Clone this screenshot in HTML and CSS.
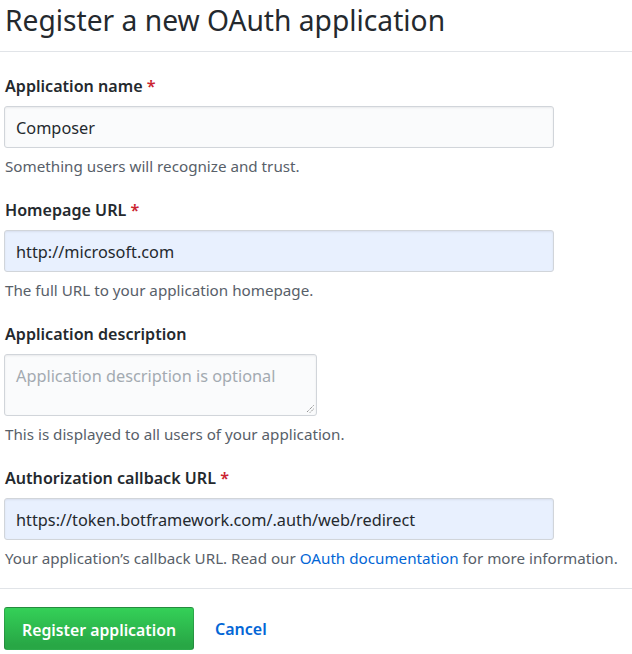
FILE: index.html
```html
<!DOCTYPE html>
<html>
<head>
<meta charset="utf-8">
<link rel="stylesheet" href="styles.css">
</head>
<body>
<div class="page">
  <h1 class="title">Register a new OAuth application</h1>
  <form class="form">
    <div class="group">
      <label class="label">Application name <span class="req">*</span></label>
      <div class="input">Composer</div>
      <p class="note">Something users will recognize and trust.</p>
    </div>
    <div class="group">
      <label class="label">Homepage URL <span class="req">*</span></label>
      <div class="input autofill">http://microsoft.com</div>
      <p class="note">The full URL to your application homepage.</p>
    </div>
    <div class="group">
      <label class="label">Application description</label>
      <div class="input textarea">
        <span class="placeholder">Application description is optional</span>
        <svg class="grip" width="9" height="9" viewBox="0 0 9 9"><path d="M8.5 1.5L1.5 8.5M8.5 5L5 8.5" stroke="#666" stroke-width="1" stroke-dasharray="1 1" fill="none"/></svg>
      </div>
      <p class="note">This is displayed to all users of your application.</p>
    </div>
    <div class="group">
      <label class="label">Authorization callback URL <span class="req">*</span></label>
      <div class="input autofill">https://token.botframework.com/.auth/web/redirect</div>
      <p class="note">Your application’s callback URL. Read our <a class="link" href="#">OAuth documentation</a> for more information.</p>
    </div>
    <div class="actions">
      <button class="btn" type="button">Register application</button>
      <a class="cancel" href="#">Cancel</a>
    </div>
  </form>
</div>
</body>
</html>
```
FILE: styles.css
```css
html, body {
  margin: 0;
  padding: 0;
  background: #fff;
}
body {
  font-family: "Noto Sans", "Open Sans", sans-serif;
  color: #24292e;
}
.page {
  padding: 0 0 0 4px;
}
.title {
  margin: 0;
  font-size: 28.2px;
  font-weight: 400;
  line-height: 40px;
  padding: 0 0 11px 1px;
  border-bottom: 1px solid #e1e4e8;
  margin-left: -4px;
  padding-left: 5px;
}
.form {
  display: flex;
  flex-direction: column;
}
.group {
  display: flex;
  flex-direction: column;
  margin-top: 23.7px;
}
.group + .group {
  margin-top: 22.5px;
}
.label {
  font-size: 16.1px;
  font-weight: 600;
  line-height: 20px;
  margin-bottom: 10.5px;
  padding-left: 1px;
}
.req {
  color: #cb2431;
}
.input {
  width: 550px;
  height: 42px;
  box-sizing: border-box;
  border: 1px solid #d1d5da;
  border-radius: 3px;
  background: #fafbfc;
  box-shadow: inset 0 1px 2px rgba(27,31,35,0.075);
  padding: 1px 11px 0;
  font-size: 16.3px;
  display: flex;
  align-items: center;
  color: #24292e;
}
.autofill {
  background: #e8f0fe;
}
.textarea {
  width: 313px;
  height: 62px;
  align-items: flex-start;
  padding-top: 11px;
  line-height: 20px;
  position: relative;
}
.placeholder {
  color: #a3aab1;
}
.grip {
  position: absolute;
  right: 2px;
  bottom: 2px;
}
.note {
  margin: 8px 0 0 1px;
  font-size: 15.2px;
  line-height: 21px;
  color: #586069;
}
.link, .cancel {
  color: #0366d6;
  text-decoration: none;
}
.actions {
  margin-top: 19px;
  padding-top: 18px;
  border-top: 1px solid #e1e4e8;
  margin-left: -4px;
  padding-left: 4px;
  display: flex;
  align-items: center;
  gap: 21px;
}
.btn {
  height: 43px;
  width: 190px;
  box-sizing: border-box;
  border: 1px solid rgba(27,31,35,0.2);
  border-radius: 3px;
  background: linear-gradient(#34d058, #28a745 90%);
  color: #fff;
  font-family: inherit;
  font-size: 15.8px;
  font-weight: 600;
  padding: 2px 0 0;
}
.cancel {
  font-size: 16px;
  font-weight: 600;
}
```
